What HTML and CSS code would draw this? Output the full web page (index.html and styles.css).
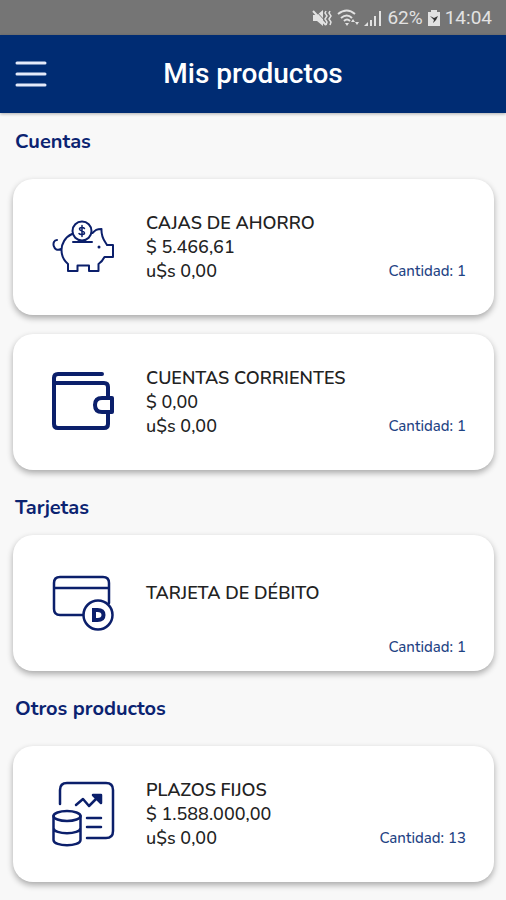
FILE: index.html
```html
<!DOCTYPE html>
<html lang="es">
<head>
<meta charset="utf-8">
<meta name="viewport" content="width=device-width, initial-scale=1">
<title>Mis productos</title>
<link rel="stylesheet" href="styles.css">
</head>
<body>
<div class="status">
  <svg class="status-icon" width="20" height="20" viewBox="0 0 20 20" aria-hidden="true">
    <path d="M1 7h4l6-5v16l-6-5H1z" fill="currentColor"/>
    <path d="M3 2l12 13" stroke="#757575" stroke-width="1"/>
    <path d="M1 3l13 14" stroke="currentColor" stroke-width="2"/>
    <path d="M14 3l-1 2 2 3-2 3 2 3-1 3M18 3l-1 2 2 3-2 3 2 3-1 3" fill="none" stroke="currentColor" stroke-width="1.5"/>
  </svg>
  <svg class="status-icon" width="22" height="20" viewBox="0 0 22 20" aria-hidden="true">
    <path d="M1 6q9-7 17 0M4 10q6-5 11 0M7 13q3-3 6 0" fill="none" stroke="currentColor" stroke-width="2"/>
    <path d="M8 15h4l-2 3zM14 14l2-3 2 3zM18 14h4l-2 3z" fill="currentColor"/>
  </svg>
  <svg class="status-icon" width="18" height="20" viewBox="0 0 18 20" aria-hidden="true">
    <path d="M0 18l4-4v4zM6 12h2v6H6zM10 8h2v10h-2zM15 3h2v15h-2z" fill="currentColor"/>
  </svg>
  <span>62%</span>
  <svg class="status-icon" width="12" height="20" viewBox="0 0 12 20" aria-hidden="true">
    <path d="M3 2h6v2h3v14H0V4h3z" fill="currentColor"/>
    <path d="M2 8l4 2 4-2-2 4-3 3 1-3z" fill="#333"/>
  </svg>
  <span>14:04</span>
</div>

<header class="bar">
  <button class="menu" type="button" aria-label="Menú">
    <svg width="32" height="28" viewBox="0 0 32 28" aria-hidden="true">
      <path d="M2 3h28M2 14h28M2 25h28" stroke="currentColor" stroke-width="3" stroke-linecap="round"/>
    </svg>
  </button>
  <h1 class="title">Mis productos</h1>
</header>

<main class="content">
  <section class="group">
    <h2 class="heading">Cuentas</h2>
    <div class="cards">
      <article class="card">
        <svg class="icon fine" viewBox="0 0 66 66" aria-hidden="true">
          <circle cx="32" cy="17" r="9.5"/>
          <path class="coin" d="M34.500 14.500c-1-1.500-5-1.500-5 .5 0 2.500 5 1.500 5 4 0 2-4.500 2-5.500.5M32 11.500v11"/>
          <path d="M23 28h19M22 20C15 23 11.500 30 11.500 36c0 7 3 11 6.500 14v7h9.500v-5.500H39V57h9.500v-7c3-2 4.500-4 6-7H63V31h-6c-2-4-6-7-5.500-16-5 0-6 1-9 4M11 35c-8 4-10-9-4-9"/>
          <circle class="eye" cx="49" cy="33" r="1.500"/>
        </svg>
        <div class="body">
          <h3 class="name">CAJAS DE AHORRO</h3>
          <p class="line">$ 5.466,61</p>
          <p class="line">u$s 0,00</p>
        </div>
        <p class="count">Cantidad: 1</p>
      </article>
      <article class="card">
        <svg class="icon bold" viewBox="0 0 66 66" aria-hidden="true">
          <path d="M52 5H8q-4 0-4 4v46q0 4 4 4h46q4 0 4-4V43M4 14h50q4 0 4 4v11M62 29H52q-7 0-7 7t7 7h10z"/>
        </svg>
        <div class="body">
          <h3 class="name">CUENTAS CORRIENTES</h3>
          <p class="line">$ 0,00</p>
          <p class="line">u$s 0,00</p>
        </div>
        <p class="count">Cantidad: 1</p>
      </article>
    </div>
  </section>

  <section class="group compact">
    <h2 class="heading">Tarjetas</h2>
    <div class="cards">
      <article class="card single">
        <svg class="icon" viewBox="0 0 66 66" aria-hidden="true">
          <path d="M33 45H10q-6 0-6-6V13q0-6 6-6h43q6 0 6 6v20M4 18h55"/>
          <circle cx="48" cy="45" r="14.500"/>
          <path class="letter" d="M44 40h3.500q6 0 6 5t-6 5H44z"/>
        </svg>
        <div class="body">
          <h3 class="name">TARJETA DE DÉBITO</h3>
        </div>
        <p class="count">Cantidad: 1</p>
      </article>
    </div>
  </section>

  <section class="group">
    <h2 class="heading">Otros productos</h2>
    <div class="cards">
      <article class="card">
        <svg class="icon" viewBox="0 0 66 66" aria-hidden="true">
          <path d="M10 23V9q0-7 7-7h39q7 0 7 7v41q0 7-7 7H37M37 37h14M37 46h14M26 24l7-6 6 7 10-10"/>
          <path class="solid" d="M43 14h8v8z"/>
          <ellipse cx="17" cy="35" rx="13.500" ry="5"/>
          <path d="M3.500 35v24c0 7 27 7 27 0V35M3.500 47c0 7 27 7 27 0"/>
        </svg>
        <div class="body">
          <h3 class="name">PLAZOS FIJOS</h3>
          <p class="line">$ 1.588.000,00</p>
          <p class="line">u$s 0,00</p>
        </div>
        <p class="count">Cantidad: 13</p>
      </article>
    </div>
  </section>
</main>
</body>
</html>
```
FILE: styles.css
```css
* {
  box-sizing: border-box;
}

body {
  margin: 0;
  background: #f8f8f8;
  color: #222;
  font-family: Nunito, "Open Sans", sans-serif;
}

h1,
h2,
h3,
p {
  margin: 0;
}

.status {
  display: flex;
  align-items: center;
  justify-content: flex-end;
  gap: 5px;
  height: 35px;
  padding: 0 14px;
  background: #757575;
  color: #e2e2e2;
  font: 19px/24px Roboto, sans-serif;
}

.status-icon {
  flex: none;
}

.bar {
  display: grid;
  grid-template-columns: 32px 1fr 32px;
  align-items: center;
  height: 78px;
  padding: 0 15px;
  background: #002c73;
  color: #fff;
  box-shadow: 0 1px 3px rgba(0, 0, 0, 0.3);
}

.menu {
  display: flex;
  padding: 0;
  border: 0;
  background: none;
  color: #e4eafa;
}

.title {
  font: 500 28px/32px Roboto, sans-serif;
  text-align: center;
}

.content {
  padding: 17px 12px 19px 13px;
}

.group + .group {
  margin-top: 26px;
}

.heading {
  margin-bottom: 25px;
  padding-left: 2px;
  color: #0b2371;
  font-size: 20px;
  font-weight: 700;
  line-height: 24px;
}

.compact .heading {
  margin-bottom: 15px;
}

.cards {
  display: grid;
  gap: 19px;
}

.card {
  display: grid;
  grid-template-columns: 66px 1fr auto;
  column-gap: 30px;
  align-items: center;
  min-height: 136px;
  padding: 32px 28px 32px 37px;
  border-radius: 20px;
  background: #fff;
  box-shadow: 0 3px 6px rgba(0, 0, 0, 0.32);
}

.single {
  padding-top: 12px;
  padding-bottom: 12px;
}

.icon {
  width: 66px;
  height: 66px;
  fill: none;
  stroke: #0b1f6b;
  stroke-width: 2.500;
  stroke-linejoin: round;
  stroke-linecap: round;
}

.fine {
  stroke-width: 2;
}

.fine .coin {
  stroke-width: 1.500;
}

.fine .eye {
  fill: #0b1f6b;
  stroke: none;
}

.bold {
  stroke-width: 4;
}

.icon .solid {
  fill: #0b1f6b;
}

.icon .letter {
  stroke-width: 4;
  stroke-linejoin: miter;
}

.single .body {
  padding-bottom: 20px;
}

.name,
.line {
  font-size: 18px;
  line-height: 24px;
}

.name {
  font-weight: 600;
}

.line {
  font-weight: 500;
}

.count {
  align-self: end;
  color: #1f4484;
  font-size: 15px;
  font-weight: 500;
  line-height: 24px;
}
```
